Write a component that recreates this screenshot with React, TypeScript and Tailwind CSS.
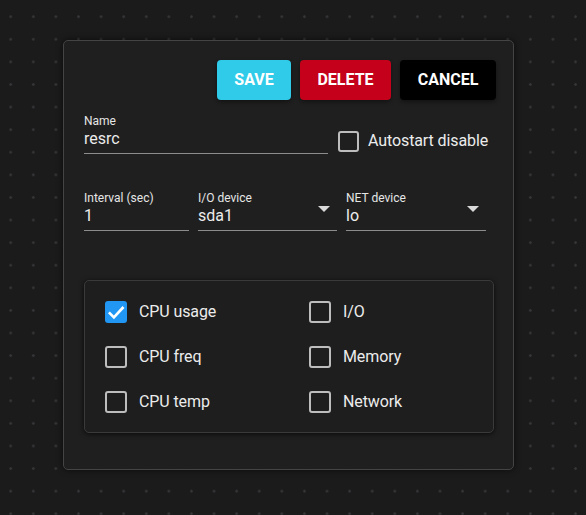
import React from "react";

function Field({ label, value, width, select }: { label: string; value: string; width: string; select?: boolean }) {
  return (
    <div className={`${width} flex flex-col border-b border-[#8c8c8c] relative`}>
      <span className="text-[12px] leading-[14px] text-[#e6e6e6]">{label}</span>
      <span className="text-[16px] leading-[22px] text-[#ececec] pb-[3px]">{value}</span>
      {select && (
        <svg className="absolute right-[7px] top-[15px]" width="12" height="6" viewBox="0 0 12 6">
          <path d="M0 0 L12 0 L6 6 Z" fill="#d9d9d9" />
        </svg>
      )}
    </div>
  );
}

function Check({ label, checked }: { label: string; checked?: boolean }) {
  return (
    <div className="flex items-center gap-[12px] h-[22px]">
      {checked ? (
        <div className="w-[22px] h-[22px] rounded-[3px] bg-[#2196f3] flex items-center justify-center">
          <svg width="20" height="20" viewBox="0 0 24 24">
            <path d="M3.5 12.5 L9.5 18.5 L21 6" stroke="white" strokeWidth="3.2" fill="none" />
          </svg>
        </div>
      ) : (
        <div className="w-[22px] h-[22px] rounded-[3px] border-2 border-[#bdbdbd]" />
      )}
      <span className="text-[16px] text-[#ececec] whitespace-nowrap tracking-[-0.1px]">{label}</span>
    </div>
  );
}

export default function App() {
  return (
    <div
      className="w-[586px] h-[515px] bg-[#1b1b1c] pl-[63px] pt-[40px] font-['Roboto',sans-serif] bg-[radial-gradient(circle,#353537_1px,transparent_1.6px)] bg-[length:22.6px_22.6px] bg-[position:-0.6px_5.4px]"
    >
      <div className="w-[451px] h-[430px] bg-[#1f1f1f] border border-[#444] rounded-[5px] shadow-[0_0_6px_rgba(0,0,0,0.6)] pl-[20px] pr-[17px] pt-[19px]">
        <div className="flex justify-end gap-[9px]">
          <button className="w-[74px] h-[40px] rounded-[4px] bg-[#30cbe9] text-white font-bold text-[16px] shadow-[0_2px_4px_rgba(0,0,0,0.4)]">SAVE</button>
          <button className="w-[91px] h-[40px] rounded-[4px] bg-[#c5001a] text-white font-bold text-[16px] shadow-[0_2px_4px_rgba(0,0,0,0.4)]">DELETE</button>
          <button className="w-[96px] h-[40px] rounded-[4px] bg-[#000000] text-white font-bold text-[16px] shadow-[0_2px_4px_rgba(0,0,0,0.4)]">CANCEL</button>
        </div>
        <div className="flex items-end mt-[14px] gap-[10px]">
          <Field label="Name" value="resrc" width="w-[244px]" />
          <div className="flex items-center gap-[9px] pb-[1px]">
            <div className="w-[21px] h-[21px] rounded-[3px] border-2 border-[#bdbdbd]" />
            <span className="text-[16px] text-[#ececec] whitespace-nowrap tracking-[-0.1px]">Autostart disable</span>
          </div>
        </div>
        <div className="flex mt-[37px] gap-[9px]">
          <Field label="Interval (sec)" value="1" width="w-[105px]" />
          <Field label="I/O device" value="sda1" width="w-[139px]" select />
          <Field label="NET device" value="lo" width="w-[140px]" select />
        </div>
        <div className="mt-[49px] w-[410px] h-[153px] rounded-[5px] border border-[#3a3a3a] bg-[#1e1e1e] shadow-[0_1px_5px_rgba(0,0,0,0.7)] pl-[20px] pt-[20px]">
          <div className="grid grid-cols-[204px_1fr] gap-y-[23px]">
            <Check label="CPU usage" checked />
            <Check label="I/O" />
            <Check label="CPU freq" />
            <Check label="Memory" />
            <Check label="CPU temp" />
            <Check label="Network" />
          </div>
        </div>
      </div>
    </div>
  );
}
